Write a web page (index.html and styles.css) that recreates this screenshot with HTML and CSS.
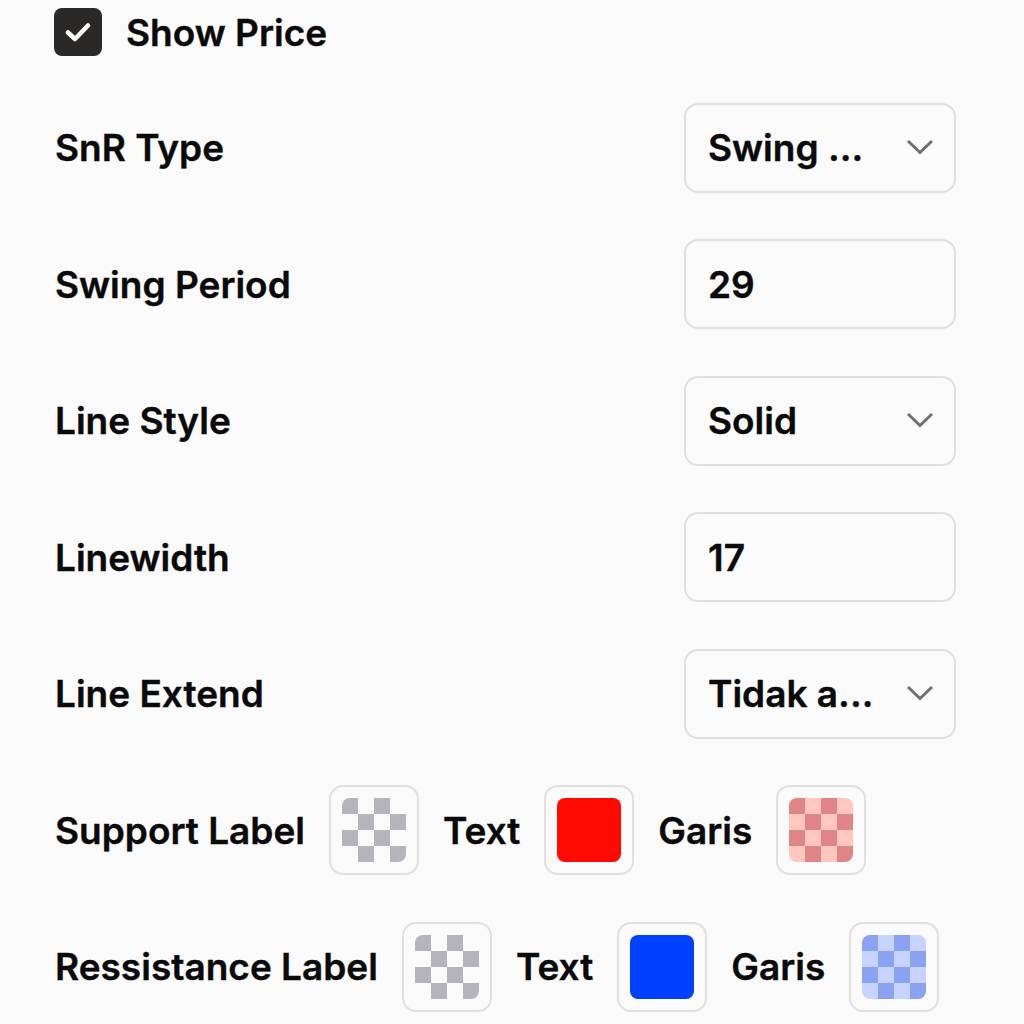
FILE: index.html
```html
<!DOCTYPE html>
<html lang="id">
<head>
<meta charset="utf-8">
<title>Settings</title>
<link rel="stylesheet" href="styles.css">
</head>
<body>
<div class="panel">
  <div class="row check-row">
    <span class="checkbox">
      <svg width="48" height="48" viewBox="0 0 48 48"><path d="M14 24.5 L21 31 L34 17.5" fill="none" stroke="#fff" stroke-width="4.5" stroke-linecap="round" stroke-linejoin="round"/></svg>
    </span>
    <span class="check-label">Show Price</span>
  </div>

  <div class="row">
    <span class="label">SnR Type</span>
    <div class="field select"><span class="value">Swing ...</span><svg class="chev" width="28" height="16" viewBox="0 0 28 16"><path d="M2 2 L14 13.5 L26 2" fill="none" stroke="#707070" stroke-width="3"/></svg></div>
  </div>

  <div class="row">
    <span class="label">Swing Period</span>
    <div class="field"><span class="value">29</span></div>
  </div>

  <div class="row">
    <span class="label">Line Style</span>
    <div class="field select"><span class="value">Solid</span><svg class="chev" width="28" height="16" viewBox="0 0 28 16"><path d="M2 2 L14 13.5 L26 2" fill="none" stroke="#707070" stroke-width="3"/></svg></div>
  </div>

  <div class="row">
    <span class="label">Linewidth</span>
    <div class="field"><span class="value">17</span></div>
  </div>

  <div class="row">
    <span class="label">Line Extend</span>
    <div class="field select"><span class="value">Tidak a...</span><svg class="chev" width="28" height="16" viewBox="0 0 28 16"><path d="M2 2 L14 13.5 L26 2" fill="none" stroke="#707070" stroke-width="3"/></svg></div>
  </div>

  <div class="row color-row">
    <span class="label">Support Label</span>
    <span class="swatch"><span class="inner checker grey"></span></span>
    <span class="label">Text</span>
    <span class="swatch"><span class="inner solid red"></span></span>
    <span class="label">Garis</span>
    <span class="swatch"><span class="inner checker light-red"></span></span>
  </div>

  <div class="row color-row">
    <span class="label">Ressistance Label</span>
    <span class="swatch"><span class="inner checker grey"></span></span>
    <span class="label">Text</span>
    <span class="swatch"><span class="inner solid blue"></span></span>
    <span class="label">Garis</span>
    <span class="swatch"><span class="inner checker light-blue"></span></span>
  </div>
</div>
</body>
</html>
```

FILE: styles.css
```css
html, body {
  margin: 0;
  padding: 0;
  background: #fafafa;
}

body {
  font-family: Inter, "Noto Sans", "Liberation Sans", sans-serif;
  color: #0a0a0a;
  font-weight: 600;
  font-size: 37px;
  width: 1024px;
  height: 1024px;
  overflow: hidden;
}

.panel {
  width: 901px;
  padding: 8px 0 0 55px;
  display: flex;
  flex-direction: column;
  gap: 46.5px;
}

.row {
  display: flex;
  align-items: center;
  justify-content: space-between;
  height: 90px;
}

.check-row {
  height: 48px;
  justify-content: flex-start;
  gap: 24px;
  margin-left: -1px;
}

.checkbox {
  width: 48px;
  height: 48px;
  border-radius: 8px;
  background: #2a2927;
  display: flex;
}

.label, .check-label {
  white-space: nowrap;
  -webkit-text-stroke: 0.4px #0a0a0a;
}

.value {
  -webkit-text-stroke: 0.4px #0a0a0a;
}

.field {
  box-sizing: border-box;
  width: 272px;
  height: 90px;
  border: 2px solid #e0e0e0;
  border-radius: 14px;
  background: #fafafa;
  display: flex;
  align-items: center;
  padding: 0 20px 0 22px;
}

.select {
  justify-content: space-between;
}

.chev {
  display: block;
  margin-top: -1px;
}

.color-row {
  justify-content: flex-start;
  gap: 24px;
}

.swatch {
  box-sizing: border-box;
  width: 90px;
  height: 90px;
  border: 2px solid #e0e0e0;
  border-radius: 14px;
  background: #fafafa;
  display: flex;
  align-items: center;
  justify-content: center;
}

.inner {
  width: 64px;
  height: 64px;
  border-radius: 8px;
  display: block;
}

.solid.red { background: #ff0a00; }
.solid.blue { background: #0040ff; }

.checker {
  background-size: 32px 32px;
  background-position: 0 0;
}

.checker.grey {
  background-color: #fafafa;
  background-image: conic-gradient(transparent 0 25%, #b4b4ba 0 50%, transparent 0 75%, #b4b4ba 0);
}

.checker.light-red {
  background-color: #ffc7c0;
  background-image: conic-gradient(transparent 0 25%, #e08585 0 50%, transparent 0 75%, #e08585 0);
}

.checker.light-blue {
  background-color: #c6d4ff;
  background-image: conic-gradient(transparent 0 25%, #8aa2f0 0 50%, transparent 0 75%, #8aa2f0 0);
}
```
